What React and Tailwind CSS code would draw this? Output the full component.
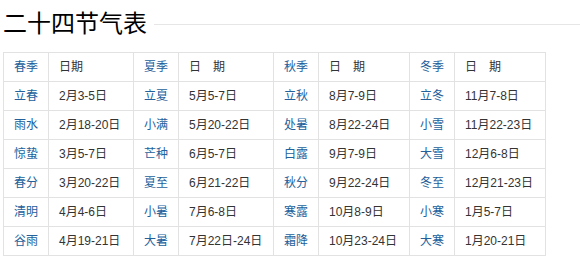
import React from 'react';

const rows = [
  ['立春', '2月3-5日', '立夏', '5月5-7日', '立秋', '8月7-9日', '立冬', '11月7-8日'],
  ['雨水', '2月18-20日', '小满', '5月20-22日', '处暑', '8月22-24日', '小雪', '11月22-23日'],
  ['惊蛰', '3月5-7日', '芒种', '6月5-7日', '白露', '9月7-9日', '大雪', '12月6-8日'],
  ['春分', '3月20-22日', '夏至', '6月21-22日', '秋分', '9月22-24日', '冬至', '12月21-23日'],
  ['清明', '4月4-6日', '小暑', '7月6-8日', '寒露', '10月8-9日', '小寒', '1月5-7日'],
  ['谷雨', '4月19-21日', '大暑', '7月22日-24日', '霜降', '10月23-24日', '大寒', '1月20-21日'],
];

const header = ['春季', '日期', '夏季', '日　期', '秋季', '日　期', '冬季', '日　期'];

const widths = ['w-[45px]', 'w-[85px]', 'w-[45px]', 'w-[95px]', 'w-[45px]', 'w-[91px]', 'w-[45px]', 'w-[91px]'];

const Cell = ({ text, idx }) => {
  const isName = idx % 2 === 0;
  return (
    <td
      className={`h-[29px] border border-[#e2e2e2] p-0 ${
        isName ? 'text-center text-[#22619c]' : 'pl-[10px] text-left text-[#333]'
      }`}
    >
      {text}
    </td>
  );
};

const App = () => {
  return (
    <div
      className="w-[580px] h-[278px] bg-white overflow-hidden"
      style={{ fontFamily: '"Liberation Sans", "Noto Sans CJK SC", sans-serif' }}
    >
      {/* Title */}
      <div className="flex items-center pt-[10px] pl-[3px]">
        <h1 className="text-[24px] leading-[28px] text-black font-normal">二十四节气表</h1>
        <div className="flex-1 ml-[7px] h-px bg-[#e6e6e6]" />
      </div>

      {/* Table */}
      <table className="ml-[3px] mt-[14px] border-collapse table-fixed text-[12px] leading-[14px]">
        <colgroup>
          {widths.map((w, i) => (
            <col key={i} className={w} />
          ))}
        </colgroup>
        <tbody>
          <tr>
            {header.map((h, i) => (
              <Cell key={i} text={h} idx={i} />
            ))}
          </tr>
          {rows.map((r, ri) => (
            <tr key={ri}>
              {r.map((c, i) => (
                <Cell key={i} text={c} idx={i} />
              ))}
            </tr>
          ))}
        </tbody>
      </table>
    </div>
  );
};

export default App;
